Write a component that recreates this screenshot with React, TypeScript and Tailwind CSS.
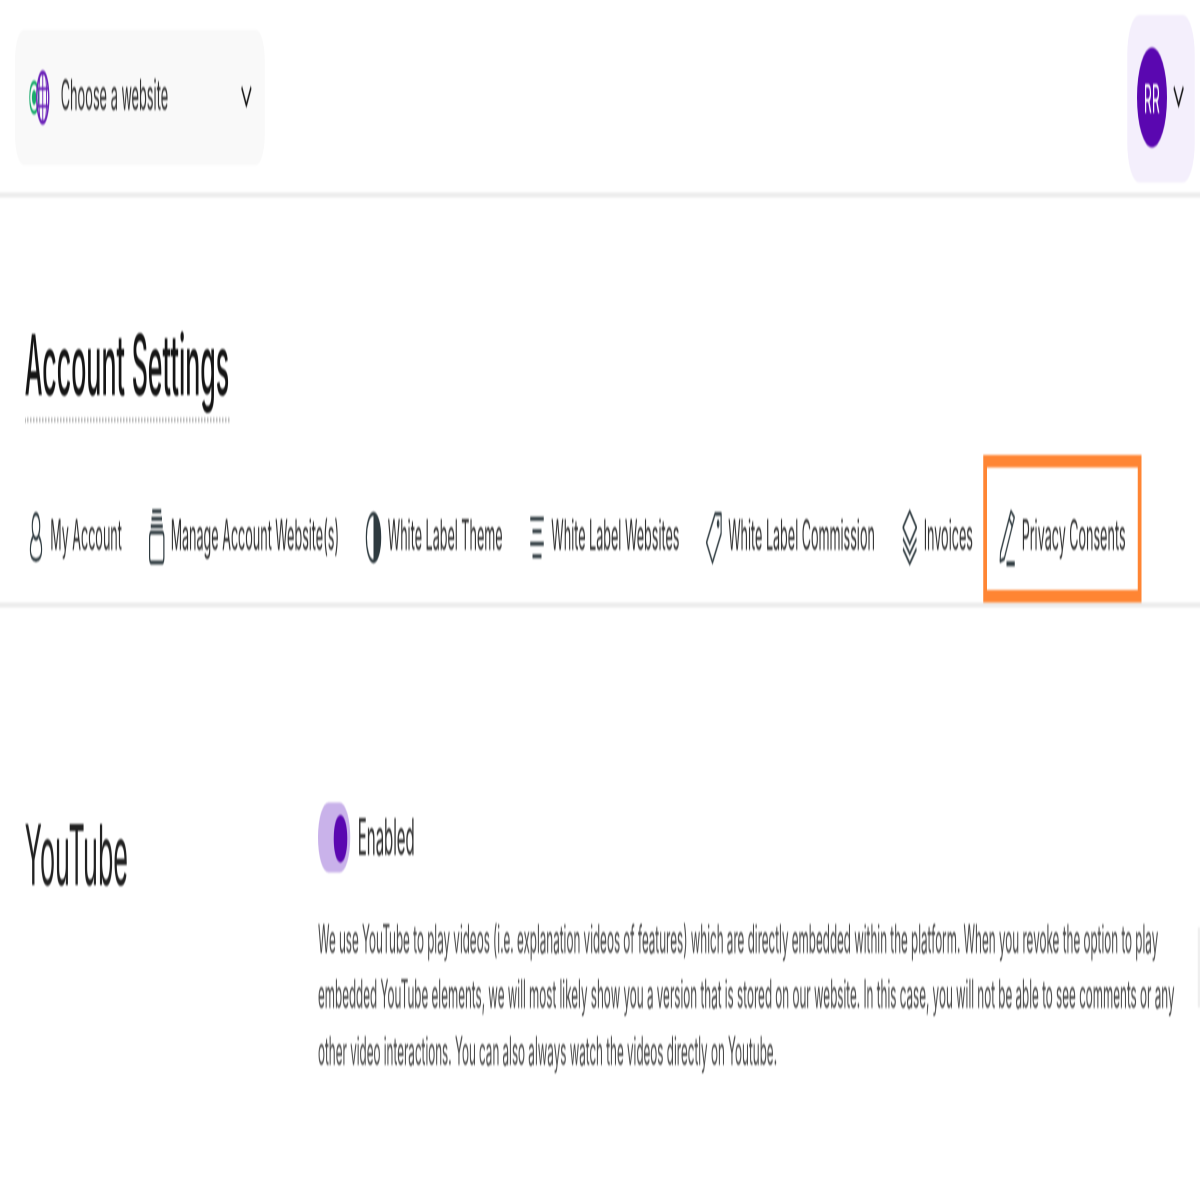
const iconClass = 'w-6 h-6 shrink-0 text-[#2f3b40]';

function Chevron({ className }: { className: string }) {
  return (
    <svg viewBox="0 0 16 10" fill="none" stroke="#111" strokeWidth="1.8" className={className}>
      <path d="M1 1l7 8 7-8" />
    </svg>
  );
}

function UserIcon() {
  return (
    <svg viewBox="0 0 24 24" fill="none" stroke="currentColor" strokeWidth="1.5" className={iconClass}>
      <circle cx="12" cy="7.5" r="5" />
      <path d="M8.5 11.5C5.5 13 4.5 15 4.500 17c0 2.500 3 4 7.500 4s7.500-1.500 7.500-4c0-2-1-4-4-5.500" />
    </svg>
  );
}

function SiteIcon() {
  return (
    <svg viewBox="0 0 24 24" fill="none" stroke="currentColor" strokeWidth="1.6" className={iconClass}>
      <path d="M6 1.500h12M5 4.500h14M4 7.500h16" />
      <rect x="2.500" y="10" width="19" height="12" rx="2" />
    </svg>
  );
}

function ThemeIcon() {
  return (
    <svg viewBox="0 0 24 24" className={iconClass}>
      <circle cx="12" cy="12" r="9.500" fill="none" stroke="currentColor" strokeWidth="1.6" />
      <path d="M12 2.500a9.500 9.500 0 0 1 0 19z" fill="currentColor" />
    </svg>
  );
}

function ListIcon() {
  return (
    <svg viewBox="0 0 24 24" fill="none" stroke="currentColor" strokeWidth="1.6" className={iconClass}>
      <path d="M3 4.500h18M6 9.500h12M3 14.500h18M6 19.500h12" />
    </svg>
  );
}

function TagIcon() {
  return (
    <svg viewBox="0 0 24 24" fill="none" stroke="currentColor" strokeWidth="1.5" className={iconClass}>
      <path d="M13.500 2.500h8v8L10 22 2 14z" strokeLinejoin="round" />
      <circle cx="17.500" cy="6.500" r="1" />
    </svg>
  );
}

function LayersIcon() {
  return (
    <svg viewBox="0 0 24 24" fill="none" stroke="currentColor" strokeWidth="1.500" strokeLinejoin="round" className={iconClass}>
      <path d="M12 1.500L21 8l-9 6.500L3 8z" />
      <path d="M3 12.500l9 6 9-6M3 16.500l9 6 9-6" />
    </svg>
  );
}

function PenIcon() {
  return (
    <svg viewBox="0 0 24 24" fill="none" stroke="currentColor" strokeWidth="1.400" strokeLinejoin="round" className={iconClass}>
      <path d="M17 1.500l4.500 2.500L8 20.500l-5.500 1 .5-3.500z" />
      <path d="M14.500 4.500l4.500 3" />
      <path d="M11 22.500h11" strokeWidth="2" />
    </svg>
  );
}

function BrandIcon() {
  return (
    <svg viewBox="0 0 28 22" fill="none" className="w-7 h-[22px] shrink-0">
      <circle cx="6.500" cy="11" r="6" stroke="#1bab6c" strokeWidth="1.600" />
      <circle cx="6.500" cy="11" r="3" fill="#1bab6c" />
      <ellipse cx="18" cy="11" rx="8" ry="10" stroke="#6a22b8" strokeWidth="1.800" />
      <path d="M18 1.500v19M14 2.500c-1.500 5-1.500 12 0 17M22 2.500c1.500 5 1.500 12 0 17M11 7.500h14M11 14.500h14" stroke="#6a22b8" strokeWidth="1.200" />
    </svg>
  );
}

const tabs = [
  { label: 'My Account', icon: <UserIcon /> },
  { label: 'Manage Account Website(s)', icon: <SiteIcon /> },
  { label: 'White Label Theme', icon: <ThemeIcon /> },
  { label: 'White Label Websites', icon: <ListIcon /> },
  { label: 'White Label Commission', icon: <TagIcon /> },
  { label: 'Invoices', icon: <LayersIcon /> },
  { label: 'Privacy Consents', icon: <PenIcon />, highlighted: true },
];

export default function App() {
  return (
    <div className="w-[1200px] h-[1200px] overflow-hidden bg-white">
      {/* the shot is a 1600x480 page squeezed into a square, and soft from the resize */}
      <div className="relative w-[1600px] h-[480px] origin-top-left scale-x-75 scale-y-[2.5] blur-[0.4px] bg-white font-['Inter',sans-serif] text-[16.8px] text-[#333]">
        <header className="h-[79px] border-b-2 border-[#ececec] flex items-start justify-between pl-5 pr-[7px]">
          <button className="mt-3 w-[333px] h-[54px] rounded-xl bg-[#f9f9f9] flex items-center pl-[19px] pr-[17px]">
            <BrandIcon />
            <span className="ml-[14px] flex-1 text-left text-[17px]">Choose a website</span>
            <Chevron className="mb-[2px] w-[15px] h-[9px]" />
          </button>
          <button className="mt-[6px] w-[90px] h-[67px] rounded-2xl bg-[#f4effc] flex items-center pl-[13px]">
            <span className="mb-[2px] w-10 h-10 rounded-full bg-[#5a07b0] text-white text-[16px] flex items-center justify-center tracking-[0.5px]">RR</span>
            <Chevron className="ml-2 mb-[2px] w-[15px] h-[9px]" />
          </button>
        </header>

        <h1 className="ml-[33px] mt-[49px] w-fit pb-[3px] text-[33.4px] leading-[36px] font-medium text-[#151515] border-b-2 border-dotted border-[#bdbdbd]">
          Account Settings
        </h1>

        <nav className="mt-[13px] h-[61px] border-b-2 border-[#ececec] flex items-start gap-[3px] pl-[21px] pt-[5px]">
          {tabs.map((tab) => (
            <a
              key={tab.label}
              className={`h-[49px] flex items-center gap-[7px] pl-[15px] pr-4 pt-[6px] whitespace-nowrap ${
                tab.highlighted ? 'outline-[5px] outline-[#ff8533]' : ''
              }`}
            >
              {tab.icon}
              {tab.label}
            </a>
          ))}
        </nav>

        <section className="mt-[78px] pl-[33px] flex items-start">
          <h2 className="w-[391px] mt-[3px] text-[33.6px] leading-[36px] text-[#222]">YouTube</h2>
          <div className="flex-1 pr-6">
            <label className="flex items-center h-[28px] gap-[10px]">
              <span className="w-[43px] h-[28px] rounded-full bg-[#c9b2ea] flex items-center pl-[21px]">
                <span className="w-[18px] h-[19px] rounded-full bg-[#5a07b0]" />
              </span>
              <span className="text-[20px]">Enabled</span>
            </label>
            <p className="mt-4 text-[15.55px] leading-[22.4px] text-[#4a4a4a]">
              We use YouTube to play videos (i.e. explanation videos of features) which are directly embedded within the platform. When you revoke the option to play embedded YouTube elements, we will most likely show you a version that is stored on our website. In this case, you will not be able to see comments or any other video interactions. You can also always watch the videos directly on Youtube.
            </p>
          </div>
        </section>

        {/* scrollbar sliver at the right edge */}
        <div className="absolute right-0 top-[371px] w-[3px] h-[32px] bg-[#efefef]" />
      </div>
    </div>
  );
}
